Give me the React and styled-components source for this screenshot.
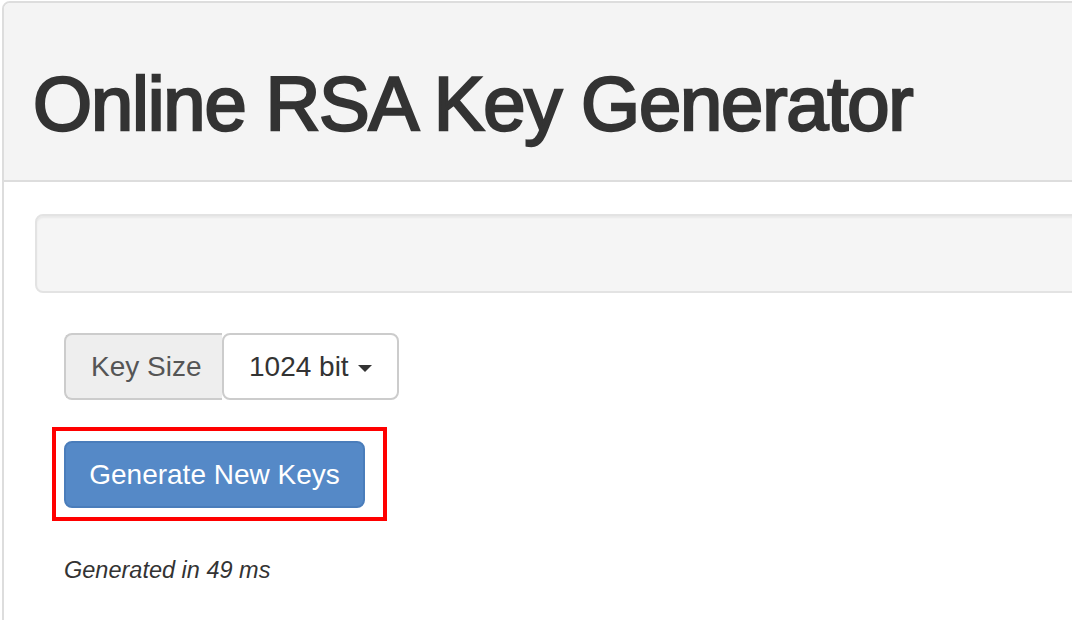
import React from "react";
import styled, { createGlobalStyle } from "styled-components";

const GlobalStyle = createGlobalStyle`
  html, body {
    margin: 0;
    padding: 0;
    background: #fff;
    overflow: hidden;
  }
  body {
    font-family: "Liberation Sans", Arial, sans-serif;
    color: #333;
  }
`;

const Panel = styled.div`
  margin: 1px 0 0 2px;
  width: calc(100% + 40px);
  height: 640px;
  border: 2px solid #dddddd;
  border-radius: 8px;
  box-sizing: border-box;
  overflow: hidden;
`;

const Header = styled.div`
  height: 179px;
  box-sizing: border-box;
  padding: 63px 29px 0;
  background: #f4f4f4;
  border-bottom: 2px solid #dddddd;
  h1 {
    margin: 0;
    font-size: 76px;
    line-height: 1;
    font-weight: 400;
    letter-spacing: -1.2px;
    -webkit-text-stroke: 2.4px #333;
    color: #333;
    white-space: nowrap;
  }
`;

const Body = styled.div`
  padding: 32px 0 0 31px;
`;

const Well = styled.div`
  height: 79px;
  box-sizing: border-box;
  background: #f5f5f5;
  border: 2px solid #e3e3e3;
  border-radius: 8px;
  box-shadow: inset 0 2px 2px rgba(0, 0, 0, 0.05);
`;

const Form = styled.div`
  padding: 40px 0 0 29px;
  display: flex;
  flex-direction: column;
  align-items: flex-start;
`;

const InputGroup = styled.div`
  display: flex;
  height: 67px;
`;

const Addon = styled.span`
  display: flex;
  align-items: center;
  width: 158px;
  box-sizing: border-box;
  padding: 0 0 0 25px;
  white-space: nowrap;
  font-size: 28px;
  color: #555;
  background: #eeeeee;
  border: 2px solid #cccccc;
  border-right: none;
  border-radius: 8px 0 0 8px;
`;

const DropButton = styled.button`
  display: flex;
  align-items: center;
  gap: 9px;
  width: 177px;
  box-sizing: border-box;
  padding: 0 0 0 25px;
  font-family: inherit;
  font-size: 28px;
  color: #333;
  background: #fff;
  border: 2px solid #cccccc;
  border-radius: 8px;
  white-space: nowrap;
`;

const Caret = styled.span`
  display: inline-block;
  width: 0;
  height: 0;
  margin-top: 3px;
  border-left: 7px solid transparent;
  border-right: 7px solid transparent;
  border-top: 7px solid #333;
`;

const Highlight = styled.div`
  position: relative;
  margin-top: 41px;
  &::after {
    content: "";
    position: absolute;
    top: -14px;
    left: -12px;
    right: -22px;
    bottom: -13px;
    border: 4px solid #ff0000;
    pointer-events: none;
  }
`;

const PrimaryButton = styled.button`
  display: block;
  width: 301px;
  height: 67px;
  box-sizing: border-box;
  font-family: inherit;
  font-size: 28px;
  color: #fff;
  background: #5589c7;
  border: 2px solid #4a7dbb;
  border-radius: 8px;
  white-space: nowrap;
`;

const Timing = styled.p`
  margin: 49px 0 0;
  font-size: 23.5px;
  font-style: italic;
  color: #333;
`;

export default function App() {
  return (
    <>
      <GlobalStyle />
      <Panel>
        <Header>
          <h1>Online RSA Key Generator</h1>
        </Header>
        <Body>
          <Well />
          <Form>
            <InputGroup>
              <Addon>Key Size</Addon>
              <DropButton>
                1024 bit <Caret />
              </DropButton>
            </InputGroup>
            <Highlight>
              <PrimaryButton>Generate New Keys</PrimaryButton>
            </Highlight>
            <Timing>Generated in 49 ms</Timing>
          </Form>
        </Body>
      </Panel>
    </>
  );
}
